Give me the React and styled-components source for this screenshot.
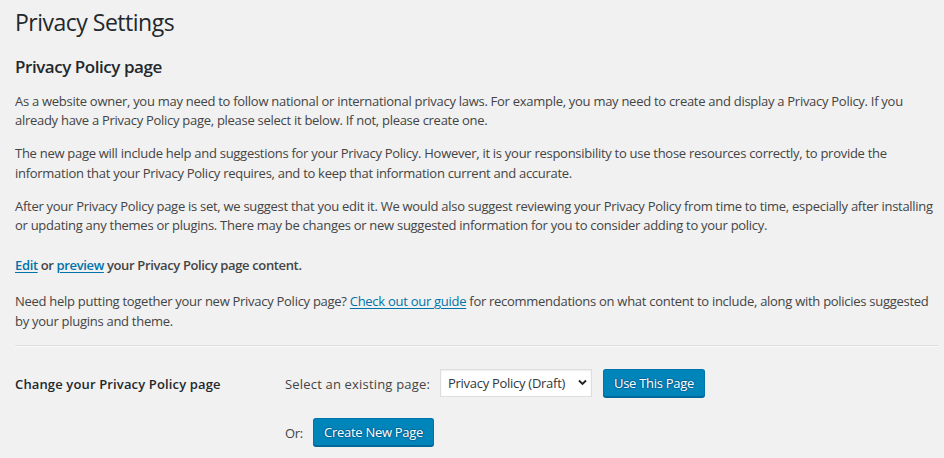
import React from "react";
import styled, { createGlobalStyle } from "styled-components";

const GlobalStyle = createGlobalStyle`
  html, body { margin: 0; padding: 0; }
  body {
    background: #f1f1f1;
    color: #444;
    font-family: "Open Sans", "Noto Sans", sans-serif;
    font-size: 13px;
    letter-spacing: -0.28px;
  }
  #root { min-height: 458px; }
`;

const Wrap = styled.div`
  padding: 0 6px 0 15px;
  display: flex;
  flex-direction: column;
`;

const Title = styled.h1`
  margin: 0;
  padding: 7px 0 4px;
  font-size: 23px;
  line-height: 30px;
  font-weight: 400;
  letter-spacing: -0.5px;
  color: #23282d;
`;

const Heading = styled.h2`
  margin: 15px 0 0;
  font-size: 17px;
  line-height: 22px;
  font-weight: 600;
  letter-spacing: -0.45px;
  color: #23282d;
`;

const Paragraph = styled.p`
  margin: ${(p) => p.$top || 13.5}px 0 0;
  line-height: 19.5px;
  white-space: nowrap;
  font-weight: ${(p) => (p.$strong ? 600 : 400)};
  letter-spacing: ${(p) => (p.$strong ? "-0.36px" : "-0.28px")};
`;

const Link = styled.a`
  color: #0073aa;
  text-decoration: underline;
  text-underline-offset: 2px;
`;

const Divider = styled.hr`
  margin: 14px 0 0;
  border: 0;
  border-top: 1px solid #ddd;
  border-bottom: 1px solid #fafafa;
  height: 0;
`;

const FormTable = styled.div`
  margin-top: 22px;
  display: grid;
  grid-template-columns: 270px 1fr;
  row-gap: 21px;
  align-items: center;
`;

const RowLabel = styled.div`
  font-weight: 600;
  color: #23282d;
  letter-spacing: 0.14px;
  padding-top: 1px;
`;

const Controls = styled.div`
  display: flex;
  align-items: center;
  gap: 10px;
`;

const FieldLabel = styled.label`
  color: #444;
  padding-top: 1px;
  letter-spacing: ${(p) => (p.$wide ? "0.18px" : "-0.28px")};
`;

const SelectBox = styled.div`
  position: relative;
  display: inline-flex;
  margin-right: 1px;
`;

const Select = styled.select`
  appearance: none;
  -webkit-appearance: none;
  height: 28px;
  width: 152px;
  margin: 0;
  padding: 0 24px 0 7px;
  border: 1px solid #ddd;
  border-radius: 0;
  background: #fff;
  box-shadow: inset 0 1px 2px rgba(0, 0, 0, 0.07);
  color: #32373c;
  font-family: inherit;
  font-size: 13px;
  letter-spacing: -0.28px;
  outline: none;
`;

const Chevron = styled.svg`
  position: absolute;
  right: 5px;
  top: 10px;
  width: 9px;
  height: 7px;
  pointer-events: none;
`;

const Button = styled.button`
  height: 28px;
  margin: 0;
  padding: 0 10px 1px;
  border: 1px solid #0073aa;
  border-bottom-color: #006799;
  border-radius: 3px;
  background: #0085ba;
  box-shadow: 0 1px 0 #006799;
  color: #fff;
  font-family: inherit;
  font-size: 13px;
  letter-spacing: -0.28px;
  line-height: 26px;
  text-shadow: 0 -1px 1px #006799, 1px 0 1px #006799, 0 1px 1px #006799,
    -1px 0 1px #006799;
  cursor: pointer;
`;

export default function App() {
  return (
    <>
      <GlobalStyle />
      <Wrap>
        <Title>Privacy Settings</Title>
        <Heading>Privacy Policy page</Heading>
        <Paragraph>
          As a website owner, you may need to follow national or international privacy laws. For example, you may need to create and display a Privacy Policy. If you
          <br />
          already have a Privacy Policy page, please select it below. If not, please create one.
        </Paragraph>
        <Paragraph>
          The new page will include help and suggestions for your Privacy Policy. However, it is your responsibility to use those resources correctly, to provide the
          <br />
          information that your Privacy Policy requires, and to keep that information current and accurate.
        </Paragraph>
        <Paragraph>
          After your Privacy Policy page is set, we suggest that you edit it. We would also suggest reviewing your Privacy Policy from time to time, especially after installing
          <br />
          or updating any themes or plugins. There may be changes or new suggested information for you to consider adding to your policy.
        </Paragraph>
        <Paragraph $strong $top={20}>
          <Link href="#">Edit</Link> or <Link href="#">preview</Link> your Privacy Policy page content.
        </Paragraph>
        <Paragraph $top={17}>
          Need help putting together your new Privacy Policy page? <Link href="#">Check out our guide</Link> for recommendations on what content to include, along with policies suggested
          <br />
          by your plugins and theme.
        </Paragraph>
        <Divider />
        <FormTable>
          <RowLabel>Change your Privacy Policy page</RowLabel>
          <Controls>
            <FieldLabel $wide htmlFor="page_for_privacy_policy">Select an existing page:</FieldLabel>
            <SelectBox>
              <Select id="page_for_privacy_policy" defaultValue="draft">
                <option value="draft">Privacy Policy (Draft)</option>
              </Select>
              <Chevron viewBox="0 0 9 7" aria-hidden="true">
                <path d="M1 1.5 L4.5 5 L8 1.5" fill="none" stroke="#222" strokeWidth="1.9" />
              </Chevron>
            </SelectBox>
            <Button type="button">Use This Page</Button>
          </Controls>
          <div />
          <Controls>
            <FieldLabel>Or:</FieldLabel>
            <Button type="button">Create New Page</Button>
          </Controls>
        </FormTable>
      </Wrap>
    </>
  );
}
